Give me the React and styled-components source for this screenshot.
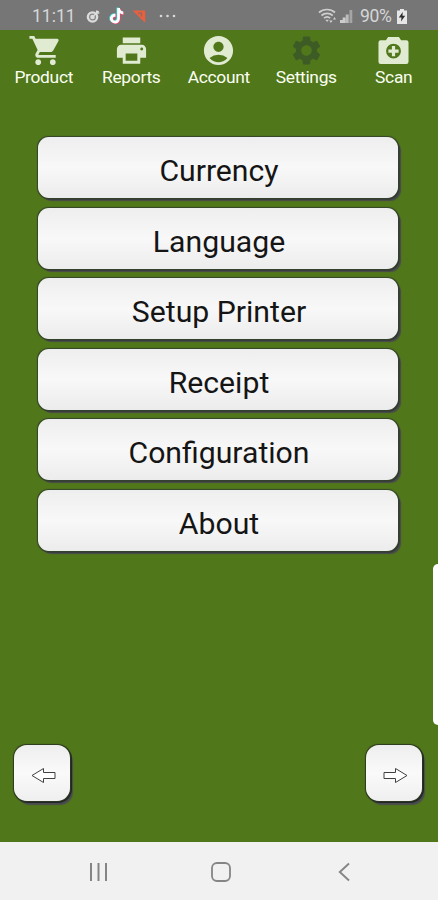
import React from 'react'
import styled, { createGlobalStyle } from 'styled-components'
import { MdShoppingCart, MdPrint, MdAccountCircle, MdSettings } from 'react-icons/md'

const GlobalStyle = createGlobalStyle`
  html, body {
    margin: 0;
    padding: 0;
    background: #51771b;
  }
  body {
    font-family: Roboto, 'Liberation Sans', sans-serif;
  }
  * {
    box-sizing: border-box;
  }
`

const Screen = styled.div`
  position: relative;
  display: flex;
  flex-direction: column;
  width: 438px;
  height: 900px;
  overflow: hidden;
  background: #51771b;
`

const StatusBar = styled.header`
  display: flex;
  align-items: center;
  justify-content: space-between;
  flex: none;
  height: 30px;
  padding: 2px 31px 0 32px;
  background: #767676;
  color: #d6d6d6;
  font-size: 17.5px;
  line-height: 20px;

  svg {
    display: block;
    flex: none;
  }
`

const StatusGroup = styled.div`
  display: flex;
  align-items: center;
`

const Clock = styled.span`
  width: 54px;
`

const Battery = styled.span`
  width: 34px;
  margin: 0 3px 0 7px;
  letter-spacing: -0.3px;
`

const TabBar = styled.nav`
  display: grid;
  grid-template-columns: repeat(5, 87.5px);
  flex: none;
  height: 66px;
  padding-top: 3px;
`

const Tab = styled.a`
  display: flex;
  flex-direction: column;
  align-items: center;
  color: #fafff2;
  font-size: 17.4px;
  line-height: 18px;
  letter-spacing: -0.3px;
  white-space: nowrap;

  svg {
    display: block;
    color: ${props => (props.$active ? '#3d5c25' : '#e0ebd2')};
  }
`

const CartIcon = styled(MdShoppingCart)`
  margin-left: 3px;
`

const Menu = styled.main`
  display: flex;
  flex-direction: column;
  gap: 9.5px;
  flex: 1;
  padding: 41px 40px 0 38px;
`

const KeyButton = styled.button`
  display: flex;
  align-items: center;
  justify-content: center;
  flex: none;
  padding: 0;
  border: 0;
  background: linear-gradient(#eeeeee 0%, #f8f8f8 50%, #ececed 100%);
  color: #151515;
  font-family: inherit;
`

const MenuButton = styled(KeyButton)`
  height: 61px;
  padding: 6px 0 0 2px;
  border-radius: 11px;
  box-shadow: 0 0 1px 0.5px #34432b, 1px 1px 0 0.5px #303236, 3px 3px 1px 0 #47494b;
  font-size: 30.2px;
`

const Pager = styled.div`
  display: flex;
  justify-content: space-between;
  flex: none;
  height: 97px;
  padding: 0 16px 0 14px;
`

const PagerButton = styled(KeyButton)`
  width: 56px;
  height: 56px;
  padding: 4px 0 0 2px;
  border-radius: 13px;
  background: linear-gradient(#eeeeee, #fafafa 50%, #efefef);
  box-shadow: 0 0 1px 0.5px #2b3820, 1px 1px 0 1px #242628, 3px 4px 1px 0 #4a4c4e;
`

const SystemBar = styled.footer`
  display: flex;
  align-items: center;
  flex: none;
  height: 58px;
  padding: 1px 0 0 89px;
  background: #f1f1f1;
  color: #858585;

  svg + svg {
    margin-left: 102px;
  }
  svg:last-child {
    margin-left: 107px;
  }
`

const EdgeHandle = styled.div`
  position: absolute;
  top: 564px;
  right: 0;
  width: 5px;
  height: 161px;
  border-radius: 5px 0 0 5px;
  background: #fff;
`

const TargetIcon = () => (
  <svg width="15" height="15" viewBox="0 0 15 15">
    <circle cx="6.500" cy="8" r="5.800" fill="#dcdcdc" />
    <circle cx="6.500" cy="8" r="2.900" fill="none" stroke="#858585" strokeWidth="1.200" />
    <path d="M8 6.500l4.500-4.500M10.500 1.500l.4 2.200 2.400.3" fill="none" stroke="#dcdcdc" strokeWidth="1.500" />
  </svg>
)

const NOTE = 'M9.200 1h2.700c.2 2.100 1.500 3.400 3.400 3.600v2.800c-1.300 0-2.400-.4-3.400-1.100v5.200c0 3-2.200 5-4.900 5S2 14.300 2 11.600s2.300-5 5.500-4.800v2.900c-1.600-.3-2.700.6-2.700 1.900 0 1.200 1 2.100 2.200 2.100 1.300 0 2.200-.9 2.200-2.400z'

const MusicIcon = () => (
  <svg width="17" height="18" viewBox="0 0 17 18">
    <path d={NOTE} fill="#42d8d4" transform="translate(-.8 -.6)" />
    <path d={NOTE} fill="#e8446c" transform="translate(.8 .6)" />
    <path d={NOTE} fill="#fff" />
  </svg>
)

const FlagIcon = () => (
  <svg width="14" height="15" viewBox="0 0 14 15">
    <path d="M.5 1.500h12.800v12.200L9.600 10.500 5.400 6.200z" fill="#e8603d" />
    <path d="M6.200 4.200h3.300v3.300" fill="none" stroke="#8b6a5f" strokeWidth="1.300" />
  </svg>
)

const DotsIcon = () => (
  <svg width="17" height="4" viewBox="0 0 17 4" fill="#d8d8d8">
    <circle cx="2" cy="2" r="1.300" />
    <circle cx="8.500" cy="2" r="1.300" />
    <circle cx="15" cy="2" r="1.300" />
  </svg>
)

const WifiIcon = () => (
  <svg width="19" height="16" viewBox="0 0 19 16" fill="none" stroke="#cfcfcf" strokeWidth="1.700">
    <path d="M1 4.500c4.500-4 11.500-4 16 0" />
    <path d="M3.500 7.500c3.200-2.900 8-2.900 11.200 0" />
    <path d="M6 10.200c1.800-1.600 4.400-1.600 6.200 0" />
    <path d="M7.300 11.800h3.600L9.100 14z" fill="#cfcfcf" stroke="none" />
    <path d="M11.200 12.500h3.400l-1.700 2.500zM15 11.500h3l-1.500-2.500z" fill="#cfcfcf" stroke="none" />
  </svg>
)

const SignalIcon = () => (
  <svg width="13" height="14" viewBox="0 0 13 14">
    <path d="M0 14v-3h2.700v3zM2.700 14V8.500h3V14z" fill="#cccccc" />
    <path d="M5.700 14V5.500h3V14z" fill="#bcbcbc" />
    <path d="M9.500 14V1h2.800v13z" fill="#a5a5a5" />
  </svg>
)

const BatteryIcon = () => (
  <svg width="10" height="15" viewBox="0 0 10 15">
    <path d="M3 0h4v1.500h3V15H0V1.500h3z" fill="#e6e6e6" />
    <path d="M5.700 3L1.800 8.500h2.700L4 12.500l4.200-5.700H5.500z" fill="#2c2c2c" />
  </svg>
)

const ScanIcon = () => (
  <svg width="35" height="35" viewBox="0 0 24 24" fill="currentColor">
    <path
      fillRule="evenodd"
      d="M8.300 2.800h7.400l1.500 2.200H20.800A1.500 1.500 0 0 1 22.300 6.500v13.200a1.500 1.500 0 0 1-1.500 1.500h-17.600a1.500 1.500 0 0 1-1.500-1.500V6.500a1.500 1.500 0 0 1 1.500-1.500h3.600zM12 7.300a5.100 5.100 0 1 0 0 10.200 5.100 5.100 0 0 0 0-10.200z"
    />
    <path d="M10.900 8.900h2.200v2.400h2.400v2.200h-2.400v2.400h-2.200v-2.400H8.500v-2.200h2.400z" />
  </svg>
)

const ArrowIcon = ({ right }) => (
  <svg width="25" height="17" viewBox="0 0 25 17" fill="#fff" stroke="#404040" strokeWidth="1">
    <path
      d="M1 8.500L12.500 1.500V5.500H24V11.500H12.500V15.500Z"
      transform={right ? 'translate(25 0) scale(-1 1)' : undefined}
    />
  </svg>
)

const RecentsIcon = () => (
  <svg width="20" height="20" viewBox="0 0 20 20" fill="none" stroke="currentColor" strokeWidth="2">
    <path d="M2 1v18M9.500 1v18M17 1v18" />
  </svg>
)

const HomeIcon = () => (
  <svg width="20" height="20" viewBox="0 0 20 20" fill="none" stroke="currentColor" strokeWidth="1.800">
    <rect x="1" y="1" width="18" height="18" rx="5" />
  </svg>
)

const BackIcon = () => (
  <svg width="12" height="20" viewBox="0 0 12 20" fill="none" stroke="currentColor" strokeWidth="1.900">
    <path d="M11 1.500L1.800 10l9.200 8.500" />
  </svg>
)

const tabs = [
  { label: 'Product', icon: <CartIcon size={35} /> },
  { label: 'Reports', icon: <MdPrint size={35} /> },
  { label: 'Account', icon: <MdAccountCircle size={35} /> },
  { label: 'Settings', icon: <MdSettings size={35} />, active: true },
  { label: 'Scan', icon: <ScanIcon /> },
]

const items = ['Currency', 'Language', 'Setup Printer', 'Receipt', 'Configuration', 'About']

const LeftIcons = styled(StatusGroup)`
  gap: 7px;
  svg:last-child {
    margin-left: 6px;
  }
`

const RightIcons = styled(StatusGroup)`
  svg:nth-child(2) {
    margin-left: 3px;
  }
`

const App = () => (
  <Screen>
    <GlobalStyle />
    <StatusBar>
      <StatusGroup>
        <Clock>11:11</Clock>
        <LeftIcons>
          <TargetIcon />
          <MusicIcon />
          <FlagIcon />
          <DotsIcon />
        </LeftIcons>
      </StatusGroup>
      <RightIcons>
        <WifiIcon />
        <SignalIcon />
        <Battery>90%</Battery>
        <BatteryIcon />
      </RightIcons>
    </StatusBar>
    <TabBar>
      {tabs.map(tab => (
        <Tab key={tab.label} $active={tab.active}>
          {tab.icon}
          {tab.label}
        </Tab>
      ))}
    </TabBar>
    <Menu>
      {items.map(item => (
        <MenuButton key={item}>{item}</MenuButton>
      ))}
    </Menu>
    <Pager>
      <PagerButton aria-label="Previous">
        <ArrowIcon />
      </PagerButton>
      <PagerButton aria-label="Next">
        <ArrowIcon right />
      </PagerButton>
    </Pager>
    <SystemBar>
      <RecentsIcon />
      <HomeIcon />
      <BackIcon />
    </SystemBar>
    <EdgeHandle />
  </Screen>
)

export default App
